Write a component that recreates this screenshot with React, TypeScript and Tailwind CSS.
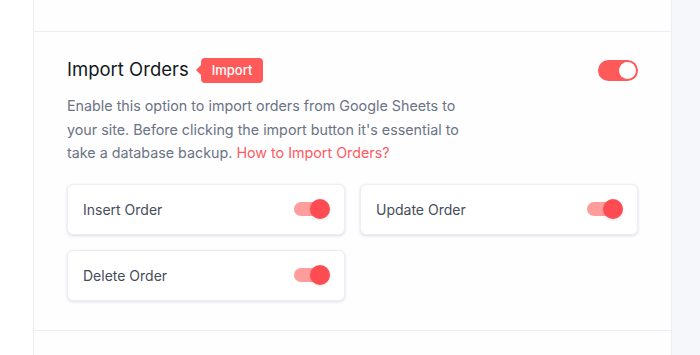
import React from 'react';

function MainToggle() {
  return (
    <div className="flex h-[21px] w-[40px] items-center justify-end rounded-full bg-[#ff5a5a] px-[2px]">
      <div className="h-[17px] w-[17px] rounded-full bg-white" />
    </div>
  );
}

function SmallToggle() {
  return (
    <div className="relative h-[20px] w-[36px]">
      <div className="absolute left-0 top-[3px] h-[14px] w-[32px] rounded-full bg-[#ff9c9c]" />
      <div className="absolute right-0 top-0 h-[20px] w-[20px] rounded-full bg-[#ff4b52] shadow-sm" />
    </div>
  );
}

function OptionCard({ label }: { label: string }) {
  return (
    <div className="flex h-[51px] items-center justify-between rounded-md border border-[#eceef3] bg-white pl-[15px] pr-[14px] shadow-[0_1px_3px_rgba(60,70,100,0.18)]">
      <span className="text-[14px] text-[#454c5a]">{label}</span>
      <SmallToggle />
    </div>
  );
}

export default function App() {
  return (
    <div className="flex h-[355px] w-[700px] overflow-hidden bg-white" style={{ fontFamily: 'Inter, "Noto Sans", sans-serif' }}>
      <div className="w-[33px] shrink-0 bg-white" />
      <div className="flex w-[639px] shrink-0 flex-col border-x border-[#eceef4] bg-[#fefeff]">
        <div className="h-[32px] border-b border-[#eceef4]" />
        <div className="border-b border-[#eceef4] px-[33px] pb-[29px] pt-[24px]">
          <div className="flex h-[28px] items-center justify-between">
            <div className="flex items-center">
              <h2 className="text-[18.5px] font-normal text-[#141822]">Import Orders</h2>
              <div className="ml-[7px] flex items-center">
                <div className="h-0 w-0 border-y-[5px] border-r-[5px] border-y-transparent border-r-[#ff5a5a]" />
                <span className="rounded-[4px] bg-[#ff5a5a] px-[11px] py-[4px] text-[13px] font-medium leading-[17px] text-white">
                  Import
                </span>
              </div>
            </div>
            <MainToggle />
          </div>
          <p className="mt-[10px] w-[404px] text-[14.3px] leading-[23.5px] text-[#6b7384]">
            Enable this option to import orders from Google Sheets to your site. Before clicking the import button it's essential to take a database backup.{' '}
            <a className="text-[#ff5a5f]">How to Import Orders?</a>
          </p>
          <div className="mt-[19px] grid grid-cols-2 gap-[15px]">
            <OptionCard label="Insert Order" />
            <OptionCard label="Update Order" />
            <OptionCard label="Delete Order" />
          </div>
        </div>
        <div className="flex-1" />
      </div>
      <div className="flex-1 bg-[#f6f7fa]" />
    </div>
  );
}
